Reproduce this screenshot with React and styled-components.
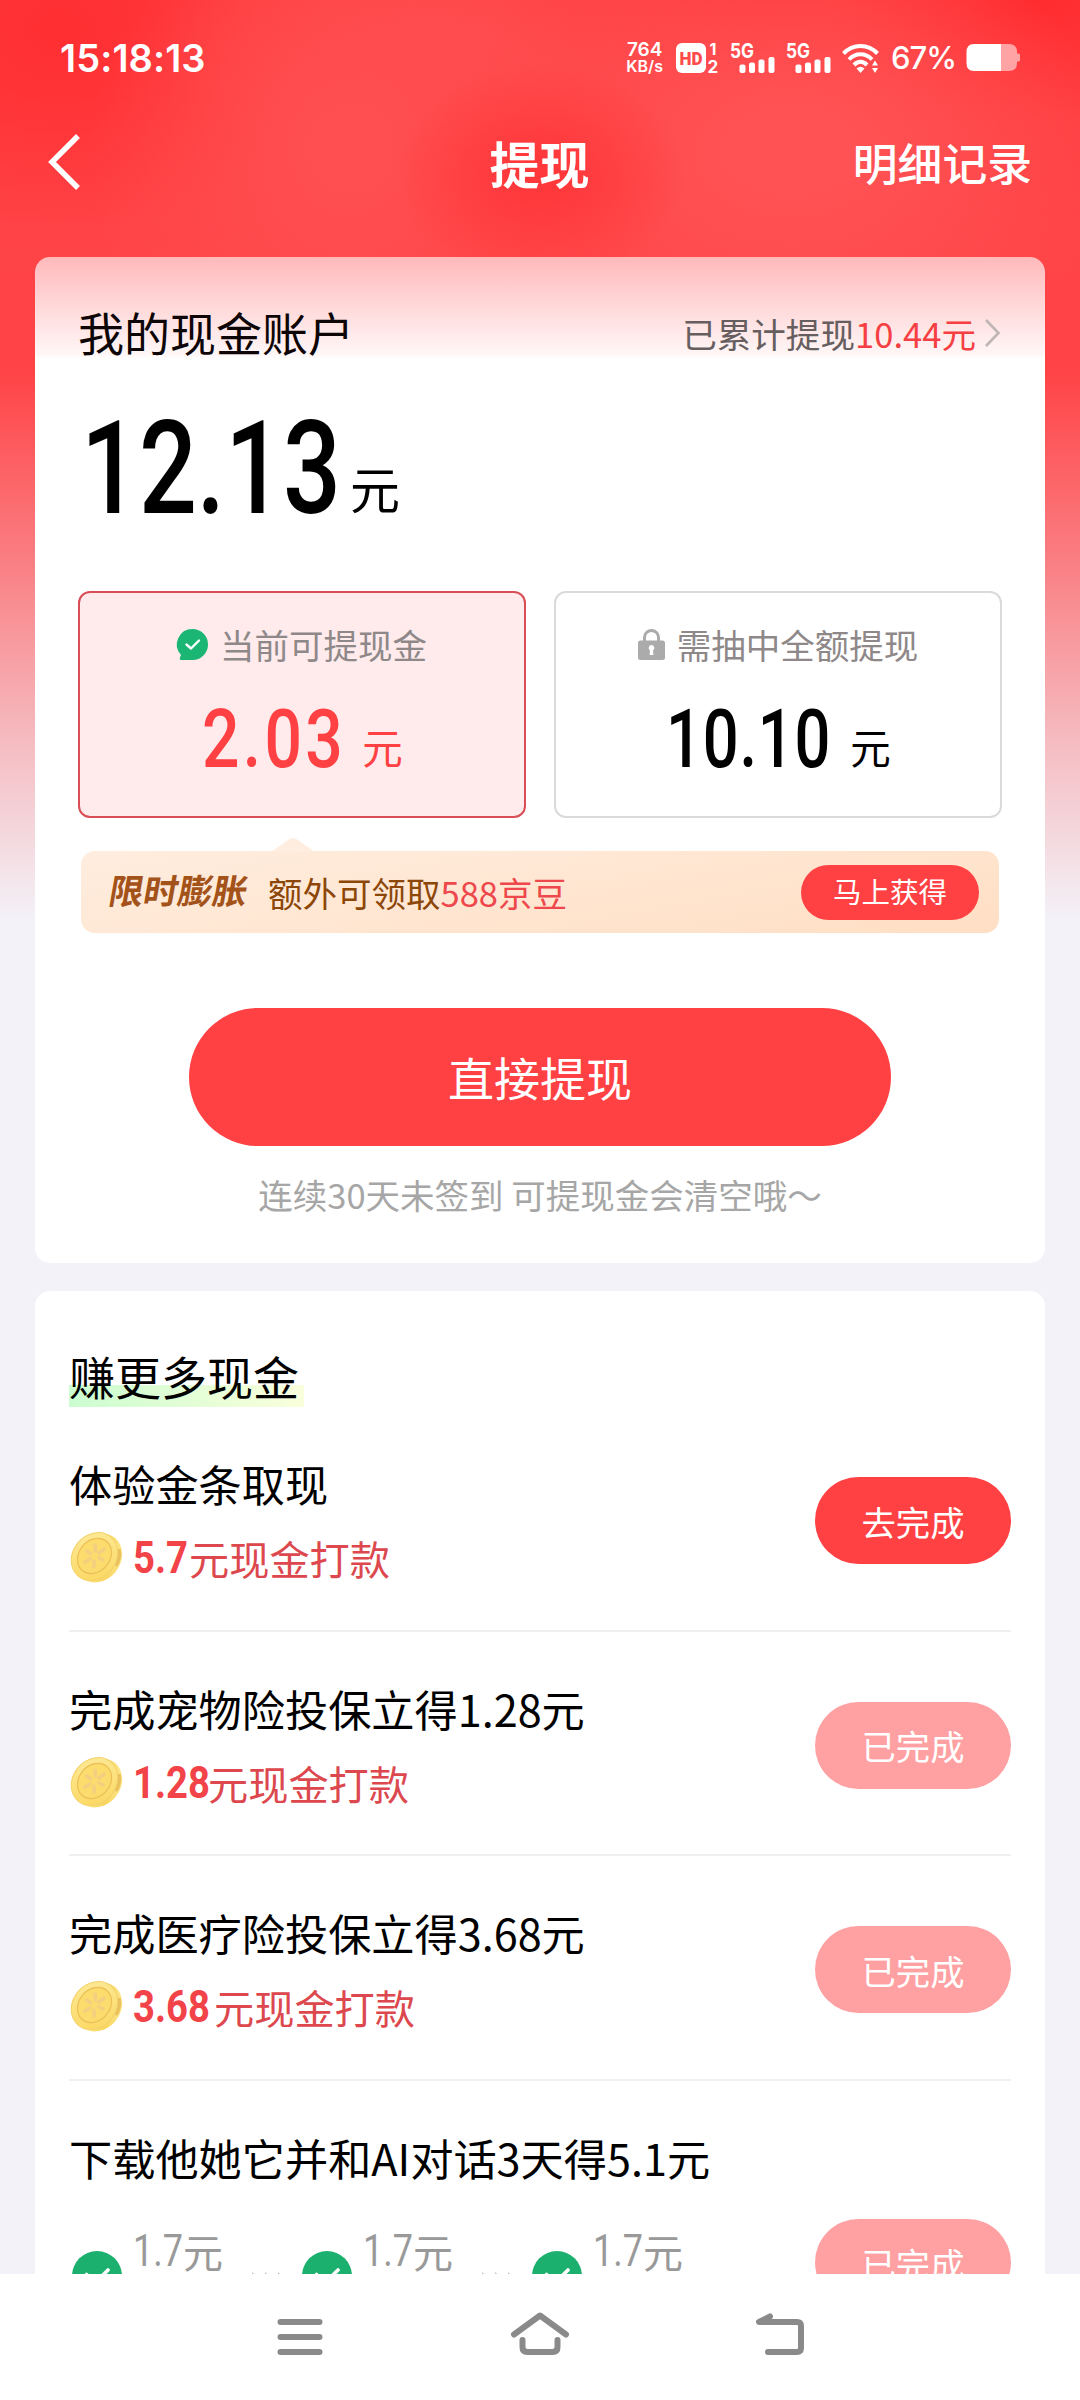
import React from 'react';
import styled, { createGlobalStyle } from 'styled-components';

const tasks = [
  { title: '体验金条取现', amount: '5.7', width: 56, done: false },
  { title: '完成宠物险投保立得1.28元', amount: '1.28', width: 75, done: true },
  { title: '完成医疗险投保立得3.68元', amount: '3.68', width: 81, done: true },
];

const steps = ['1.7', '1.7', '1.7'];

const BackIcon = () => (
  <svg width="34" height="58" viewBox="0 0 34 58">
    <path d="M31 3 L5 29 L31 55" fill="none" stroke="#fff" strokeWidth="5.5" />
  </svg>
);

const HdIcon = () => (
  <svg width="44" height="32" viewBox="0 0 44 32">
    <rect x="0" y="1" width="30" height="30" rx="6" fill="#fff" />
    <text x="15" y="22.5" textAnchor="middle" fontFamily="Roboto, sans-serif" fontWeight="900" fontSize="17.5" textLength="23" lengthAdjust="spacingAndGlyphs" fill="#ff4a4c">HD</text>
    <text x="33.5" y="13" fontFamily="Inter, sans-serif" fontWeight="700" fontSize="16" fill="#fff">1</text>
    <text x="31.5" y="31" fontFamily="Inter, sans-serif" fontWeight="700" fontSize="17" fill="#fff">2</text>
  </svg>
);

const SignalIcon = () => (
  <svg width="46" height="32" viewBox="0 0 46 32">
    <text x="0" y="15.5" fontFamily="Inter, sans-serif" fontWeight="700" fontSize="20" textLength="24" lengthAdjust="spacingAndGlyphs" fill="#fff">5G</text>
    <g fill="#fff">
      <rect x="9.5" y="22.5" width="6" height="8.5" rx="2" />
      <rect x="19" y="20.5" width="6" height="10.5" rx="2" />
      <rect x="28.5" y="17.5" width="6" height="13.5" rx="2" />
      <rect x="38.5" y="15" width="6" height="16" rx="2" />
    </g>
  </svg>
);

const WifiIcon = () => (
  <svg width="38" height="32" viewBox="0 0 38 32">
    <g fill="none" stroke="#fff" strokeWidth="4">
      <path d="M1.5 11.5 C11 1.5 26 1.5 35.5 11.5" />
      <path d="M7 17.5 C13.5 10.5 23.5 10.5 30 17.5" />
      <path d="M12 23 C16 18.8 21 18.8 25 23" />
    </g>
    <path d="M14.5 26.5 Q18.5 23 22.5 26.5 L18.5 31 Z" fill="#fff" />
    <path d="M30 23.5 L33 18.5 L36 23.5 Z M30 26 L33 31 L36 26 Z" fill="#fff" />
  </svg>
);

const BatteryIcon = () => (
  <svg width="55" height="30" viewBox="0 0 55 30">
    <path d="M35 1 H43 Q51 1 51 9 V10.500 H52.500 Q54 10.500 54 12 V17 Q54 18.500 52.500 18.500 H51 V20 Q51 28 43 28 H35 Z" fill="#ffa3a5" />
    <path d="M8 1 H35 V28 H8 Q0.500 28 0.500 20 V9 Q0.500 1 8 1 Z" fill="#fff" />
  </svg>
);

const CheckBubble = () => (
  <svg width="31" height="31" viewBox="0 0 31 31">
    <path d="M15.500 0 A15.500 15.500 0 1 1 15.500 31 L4.500 31 Q2 31 3 28.500 L4 26 A15.500 15.500 0 0 1 15.500 0 Z" fill="#1cb674" />
    <path d="M9.500 15.500 L14 19.500 L22 11.500" fill="none" stroke="#fff" strokeWidth="2.400" strokeLinecap="round" strokeLinejoin="round" />
  </svg>
);

const LockIcon = () => (
  <svg width="27" height="31" viewBox="0 0 27 31">
    <path d="M6.500 13 V8.500 A7 7 0 0 1 20.500 8.500 V13" fill="none" stroke="#ababab" strokeWidth="3" />
    <rect x="0" y="11.500" width="27" height="19.500" rx="2.500" fill="#ababab" />
    <path d="M13.500 16 a3 3 0 0 1 1.500 5.500 l0.400 4.500 h-3.800 l0.400 -4.500 a3 3 0 0 1 1.500 -5.500 Z" fill="#fff" />
  </svg>
);

const CheckCircle = () => (
  <svg width="50" height="50" viewBox="0 0 50 50">
    <circle cx="25" cy="25" r="25" fill="#1cb06f" />
    <path d="M14.500 23.500 L23 32 L36 19" fill="none" stroke="#fff" strokeWidth="3.600" strokeLinecap="round" strokeLinejoin="round" />
  </svg>
);

const CoinIcon = () => (
  <svg width="53" height="52" viewBox="0 0 53 52">
    <defs>
      <linearGradient id="coinEdge" x1="0" y1="0" x2="1" y2="1">
        <stop offset="0" stopColor="#fff0a8" />
        <stop offset="0.6" stopColor="#f8d55f" />
        <stop offset="1" stopColor="#fff0a0" />
      </linearGradient>
      <linearGradient id="coinFace" x1="1" y1="0" x2="0" y2="1">
        <stop offset="0" stopColor="#fdeb9c" />
        <stop offset="1" stopColor="#fbd65c" />
      </linearGradient>
    </defs>
    <ellipse cx="28.500" cy="27" rx="26" ry="22" transform="rotate(-50 28.500 27)" fill="url(#coinEdge)" />
    <path d="M50.500 18 Q53 27 47 36 L44 33 Q49 26 47.500 18 Z" fill="#e0b350" opacity="0.7" />
    <ellipse cx="24.500" cy="25.500" rx="25.500" ry="21.500" transform="rotate(-50 24.500 25.500)" fill="url(#coinFace)" stroke="#f4d169" strokeWidth="1" />
    <ellipse cx="24.500" cy="25" rx="19" ry="15.500" transform="rotate(-50 24.500 25)" fill="#fbdc6c" stroke="#ecbf58" strokeWidth="1.200" />
    <g stroke="#f5cf80" strokeWidth="3.600" strokeLinecap="round">
      <path d="M25 14 L25.500 20 M34 18 L29 22 M33 29 L29 27 M24 36 L24 30 M15 31 L20 28 M16.500 20 L20.500 22.500" />
    </g>
  </svg>
);

const Status = () => (
  <StatusBar>
    <Clock>15:18:13</Clock>
    <StatusIcons>
      <Speed>
        <span>764</span>
        <small>KB/s</small>
      </Speed>
      <HdIcon />
      <SignalIcon />
      <SignalIcon />
      <WifiIcon />
      <Battery>67%</Battery>
      <BatteryIcon />
    </StatusIcons>
  </StatusBar>
);

// 现金账户
const Account = () => (
  <AccountCard>
    <AccountHead>
      <AccountTitle>我的现金账户</AccountTitle>
      <Total>
        已累计提现<em>10.44元</em>
        <svg width="17" height="30" viewBox="0 0 17 30">
          <path d="M2 2 L14.500 15 L2 28" fill="none" stroke="#bfb5b7" strokeWidth="2.600" />
        </svg>
      </Total>
    </AccountHead>
    <Balance>
      <Digits $size={129} $width={261} $line={120} $scale={0.79}>12.13</Digits>
      <BalanceUnit>元</BalanceUnit>
    </Balance>
    <Options>
      <Option $active>
        <OptionLabel><CheckBubble />当前可提现金</OptionLabel>
        <OptionValue>
          <Digits $size={81} $width={144} $line={80} $gap={4}>2.03</Digits>
          <OptionUnit>元</OptionUnit>
        </OptionValue>
      </Option>
      <Option>
        <OptionLabel><LockIcon />需抽中全额提现</OptionLabel>
        <OptionValue>
          <Digits $size={81} $width={168} $line={80} $gap={1} $scale={0.78}>10.10</Digits>
          <OptionUnit>元</OptionUnit>
        </OptionValue>
      </Option>
    </Options>
    <Promo>
      <PromoTag>限时膨胀</PromoTag>
      <PromoText>额外可领取<em>588京豆</em></PromoText>
      <PromoButton>马上获得</PromoButton>
    </Promo>
    <WithdrawButton>直接提现</WithdrawButton>
    <Hint>连续30天未签到 可提现金会清空哦～</Hint>
  </AccountCard>
);

// 任务列表
const Tasks = () => (
  <TaskCard>
    <TaskHeading>赚更多现金</TaskHeading>
    {tasks.map((task) => (
      <TaskRow key={task.title}>
        <div>
          <TaskTitle>{task.title}</TaskTitle>
          <Reward>
            <CoinIcon />
            <RewardDigits $size={45} $width={task.width} $line={52} $scale={0.85}>{task.amount}</RewardDigits>
            元现金打款
          </Reward>
        </div>
        <TaskButton $done={task.done}>{task.done ? '已完成' : '去完成'}</TaskButton>
      </TaskRow>
    ))}
    <TaskRow>
      <div>
        <TaskTitle>下载他她它并和AI对话3天得5.1元</TaskTitle>
        <Steps>
          {steps.map((amount, i) => (
            <React.Fragment key={i}>
              {i > 0 && (
                <Arrows>
                  <svg width="33" height="12" viewBox="0 0 33 12" fill="#c8c8c8">
                    <path d="M0 0 L7 6 L0 12 Z M13 0 L20 6 L13 12 Z M26 0 L33 6 L26 12 Z" />
                  </svg>
                </Arrows>
              )}
              <Step>
                <CheckCircle />
                <StepAmount>
                  <StepDigits $size={45} $width={50} $line={40} $scale={0.8}>{amount}</StepDigits>元
                </StepAmount>
              </Step>
            </React.Fragment>
          ))}
        </Steps>
      </div>
      <TaskButton $done $top={138.5}>已完成</TaskButton>
    </TaskRow>
  </TaskCard>
);

const BottomNav = () => (
  <NavBar>
    <svg width="60" height="50" viewBox="0 0 60 50">
      <path d="M10.500 10 H49.500 M10.500 25 H49.500 M10.500 40 H49.500" />
    </svg>
    <svg width="60" height="50" viewBox="0 0 60 50">
      <path d="M4 22.500 L30 3.500 L56 22.500 M12.500 28 V35 Q12.500 40 17.500 40 H42.500 Q47.500 40 47.500 35 V28" />
    </svg>
    <svg width="60" height="50" viewBox="0 0 60 50">
      <path d="M20 4.500 L9 10 H47 Q51 10 51 14 V36 Q51 40 47 40 H18" />
    </svg>
  </NavBar>
);

const App = () => (
  <Page>
    <GlobalStyle />
    <Content>
      <Status />
      <Header>
        <BackIcon />
        <Title>提现</Title>
        <Detail>明细记录</Detail>
      </Header>
      <Account />
      <Tasks />
    </Content>
    <BottomNav />
  </Page>
);

const GlobalStyle = createGlobalStyle`
  * {
    box-sizing: border-box;
  }

  body {
    margin: 0;
    font-family: 'Noto Sans CJK SC', sans-serif;
  }

  em {
    font-style: normal;
  }

  svg {
    display: block;
    flex: none;
    overflow: visible;
  }
`;

const Page = styled.div`
  display: flex;
  flex-direction: column;
  width: 1080px;
  height: 2400px;
  overflow: hidden;
  background: #f3f2f8;
`;

const Content = styled.main`
  height: 2274px;
  overflow: hidden;
  background:
    radial-gradient(ellipse 145px 110px at 540px 175px, #ff383b 15%, rgba(255, 56, 59, 0)),
    radial-gradient(ellipse 330px 220px at 790px 150px, #ff5254 20%, rgba(255, 82, 84, 0)),
    radial-gradient(ellipse 260px 260px at 350px 150px, #ff4f51 10%, rgba(255, 79, 81, 0)),
    radial-gradient(ellipse 300px 160px at 460px 40px, #ff4b4d, rgba(255, 75, 77, 0)),
    radial-gradient(ellipse 260px 200px at 60px 30px, #ff2e31, rgba(255, 46, 49, 0)),
    radial-gradient(ellipse 220px 120px at 1040px 0, #ff2c2f, rgba(255, 44, 47, 0)),
    linear-gradient(#ff3b3e 0, #ff4447 250px, #ff4346 370px, #fa7b7f 550px, #f5b8bd 730px, #f3f2f8 920px);
`;

const StatusBar = styled.header`
  display: flex;
  align-items: center;
  justify-content: space-between;
  height: 116px;
  padding: 0 59px 0 60px;
  color: #fff;
`;

const Clock = styled.div`
  font: 600 38px/40px Inter, sans-serif;
  letter-spacing: 0.1px;
`;

const StatusIcons = styled.div`
  display: flex;
  align-items: center;
  gap: 10px;
`;

const Speed = styled.div`
  display: flex;
  flex-direction: column;
  align-items: center;
  margin-right: 3px;
  font: 600 19px/16px Inter, sans-serif;

  small {
    font-size: 16px;
    line-height: 16px;
  }
`;

const Battery = styled.div`
  margin-left: 1px;
  font: 500 31px/32px Inter, sans-serif;
  letter-spacing: -1px;
`;

const Header = styled.div`
  display: grid;
  grid-template-columns: 1fr auto 1fr;
  align-items: center;
  height: 92px;
  margin-bottom: 49px;
  padding: 0 48px 0 47px;
  color: #fff;
`;

const Title = styled.h1`
  margin: 0;
  font-size: 50px;
  line-height: 50px;
  font-weight: 700;
`;

const Detail = styled.div`
  justify-self: end;
  font-size: 44.8px;
  line-height: 50px;
  font-weight: 500;
`;

const AccountCard = styled.section`
  height: 1006px;
  margin: 0 35px 28px;
  padding: 51px 43px 0;
  border-radius: 15px;
  background: linear-gradient(#ffb9bb, #fff6f6 97px, #fff 102px);
`;

const AccountHead = styled.div`
  display: flex;
  align-items: center;
  justify-content: space-between;
  height: 46px;
`;

const AccountTitle = styled.h2`
  margin: 0;
  font-size: 46px;
  line-height: 46px;
  font-weight: 400;
  color: #0d0506;
`;

const Total = styled.div`
  display: flex;
  align-items: center;
  padding-top: 3px;
  font-size: 34.6px;
  line-height: 46px;
  color: #665e5f;

  em {
    color: #f53f43;
  }

  svg {
    margin: 0 1px 0 8px;
  }
`;

const Digits = styled.span`
  width: ${({ $width }) => $width}px;
  flex: none;
  font-family: Roboto, sans-serif;
  font-size: ${({ $size }) => $size}px;
  line-height: ${({ $line }) => $line}px;
  font-weight: 500;
  letter-spacing: ${({ $gap = 0 }) => $gap}px;
  white-space: nowrap;
  transform: scaleX(${({ $scale = 0.815 }) => $scale});
  transform-origin: 0 50%;
`;

const RewardDigits = styled(Digits)`
  font-weight: 700;
  color: #f24348;
`;

const StepDigits = styled(Digits)`
  font-weight: 400;
`;

const Balance = styled.div`
  display: flex;
  align-items: flex-end;
  height: 120px;
  margin-top: 55px;
  padding-left: 3px;
  color: #000;
`;

const BalanceUnit = styled.span`
  margin: 0 0 17px 8px;
  font-size: 50px;
  line-height: 50px;
`;

const Options = styled.div`
  display: flex;
  gap: 28px;
  margin-top: 62px;
`;

const Option = styled.div`
  flex: 1;
  height: 227px;
  padding-top: 34px;
  border: 2px solid ${({ $active }) => ($active ? '#d94d54' : '#dadada')};
  border-radius: 12px;
  background: ${({ $active }) => ($active ? '#ffebec' : '#fff')};
  color: ${({ $active }) => ($active ? '#ff4144' : '#000')};
`;

const OptionLabel = styled.div`
  display: flex;
  align-items: center;
  justify-content: center;
  gap: 12px;
  height: 34px;
  font-size: 34.5px;
  line-height: 34px;
  color: #8e8889;
`;

const OptionValue = styled.div`
  display: flex;
  align-items: flex-end;
  justify-content: center;
  gap: 16px;
  margin-top: 39px;
  padding-left: 1px;
`;

const OptionUnit = styled.span`
  margin-bottom: 13px;
  font-size: 40.5px;
  line-height: 40px;
`;

const Promo = styled.div`
  position: relative;
  display: flex;
  align-items: center;
  height: 82px;
  margin: 33px 3px 0;
  padding: 0 20px 0 29px;
  border-radius: 14px;
  background: linear-gradient(170deg, #ffeddf, #ffdfc4);

  &::before {
    content: '';
    position: absolute;
    left: 190px;
    top: -13px;
    width: 44px;
    height: 14px;
    background: #ffeddf;
    clip-path: polygon(0 100%, 42% 8%, 50% 0, 58% 8%, 100% 100%);
  }
`;

const PromoTag = styled.strong`
  margin: 0 20px 6px 0;
  font-size: 34.5px;
  line-height: 36px;
  font-weight: 700;
  color: #a3531a;
  transform: skewX(-10deg);
`;

const PromoText = styled.span`
  font-size: 34.5px;
  line-height: 40px;
  color: #8c4708;

  em {
    color: #ee474c;
  }
`;

const PromoButton = styled.button`
  width: 178px;
  height: 55px;
  margin-left: auto;
  padding: 0 0 2px;
  border: 0;
  border-radius: 28px;
  background: #ff4144;
  color: #fff;
  font-family: inherit;
  font-size: 28.5px;
  line-height: 40px;
`;

const WithdrawButton = styled.button`
  display: block;
  width: 702px;
  height: 138px;
  margin: 75px auto 0;
  padding: 0 0 2px;
  border: 0;
  border-radius: 69px;
  background: #ff4144;
  color: #fff;
  font-family: inherit;
  font-size: 46px;
  line-height: 60px;
`;

const Hint = styled.p`
  margin: 28px 0 0;
  font-size: 34.5px;
  line-height: 40px;
  text-align: center;
  color: #a6a6a6;
`;

const TaskCard = styled.section`
  height: 1100px;
  margin: 0 35px;
  padding: 62px 34px 0;
  border-radius: 15px;
  background: #fff;
`;

const TaskHeading = styled.h2`
  width: 235px;
  height: 54px;
  margin: 0;
  font-size: 46px;
  line-height: 44px;
  font-weight: 400;
  color: #000;
  white-space: nowrap;
  background: linear-gradient(90deg, #cbfdd0, #faffdc) 0 100% / 100% 22px no-repeat;
`;

const TaskRow = styled.div`
  display: flex;
  justify-content: space-between;
  height: 224.5px;
  padding-top: 54px;
  border-bottom: 2px solid #f0f0f1;
`;

const TaskTitle = styled.h3`
  margin: 0;
  font-size: 43.2px;
  line-height: 45px;
  font-weight: 400;
  color: #000;
  white-space: nowrap;
`;

const Reward = styled.div`
  display: flex;
  align-items: center;
  height: 52px;
  margin-top: 26px;
  font-size: 40.2px;
  line-height: 48px;
  color: #dc484e;

  svg {
    margin: 0 10px 2px 1px;
  }
`;

const TaskButton = styled.button`
  flex: none;
  width: 196px;
  height: 87px;
  margin-top: ${({ $top = 70 }) => $top - 54}px;
  padding: 0;
  border: 0;
  border-radius: 44px;
  background: ${({ $done }) => ($done ? '#ffa0a2' : '#ff4144')};
  color: #fff;
  font-family: inherit;
  font-size: 34.3px;
  line-height: 40px;
`;

const Steps = styled.div`
  display: flex;
  margin-top: 51px;
  padding-left: 3px;
`;

const Step = styled.div`
  display: flex;
  width: 180px;

  svg {
    margin: 20px 11px 0 0;
  }
`;

const StepAmount = styled.span`
  display: flex;
  height: 40px;
  font-size: 40px;
  line-height: 40px;
  color: #999;
`;

const Arrows = styled.div`
  width: 50px;
  padding-top: 41px;
`;

const NavBar = styled.nav`
  display: flex;
  justify-content: center;
  gap: 180px;
  height: 126px;
  padding-top: 38px;
  background: #fff;

  path {
    fill: none;
    stroke: #8a8a8a;
    stroke-width: 6px;
    stroke-linecap: round;
    stroke-linejoin: round;
  }
`;

export default App;
